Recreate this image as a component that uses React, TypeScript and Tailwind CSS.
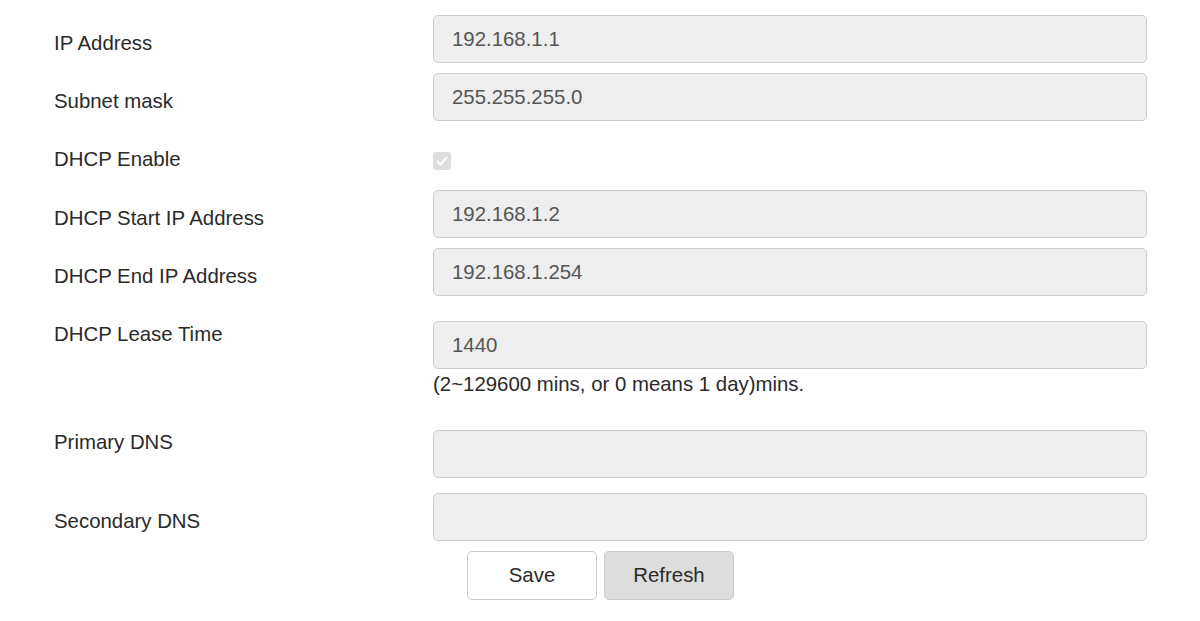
import React from 'react';

const font = "font-['Liberation_Sans',Arial,sans-serif]";

function Field({ value }: { value: string }) {
  return (
    <div className="w-[714px] h-[48px] rounded-[5px] border border-[#cccccc] bg-[#eeeeee] pl-[18px] flex items-center text-[20.4px] text-[#555555]">
      {value}
    </div>
  );
}

function Label({ children }: { children: React.ReactNode }) {
  return <div className="w-[379px] shrink-0 pt-4 leading-6 text-[20.4px] text-[#2a2a2a]">{children}</div>;
}

export default function App() {
  return (
    <div className={`w-[1200px] h-[621px] overflow-hidden bg-white ${font}`}>
      <div className="pl-[54px] pt-[15px] flex flex-col">
        {/* IP Address */}
        <div className="flex items-start">
          <Label>IP Address</Label>
          <Field value="192.168.1.1" />
        </div>

        {/* Subnet mask */}
        <div className="flex items-start mt-[10px]">
          <Label>Subnet mask</Label>
          <Field value="255.255.255.0" />
        </div>

        {/* DHCP Enable */}
        <div className="flex items-start mt-[10px] h-[48px]">
          <Label>DHCP Enable</Label>
          <div className="pt-[21px]">
            <div className="w-[18px] h-[18px] rounded-[3px] bg-[#dddddd] flex items-center justify-center">
              <svg width="14" height="14" viewBox="0 0 14 14" fill="none">
                <path d="M2.5 7.5 L5.5 10.5 L11.5 3.5" stroke="#ffffff" strokeWidth="1.8" strokeLinecap="round" strokeLinejoin="round" />
              </svg>
            </div>
          </div>
        </div>

        {/* DHCP Start */}
        <div className="flex items-start mt-[11px]">
          <Label>DHCP Start IP Address</Label>
          <Field value="192.168.1.2" />
        </div>

        {/* DHCP End */}
        <div className="flex items-start mt-[10px]">
          <Label>DHCP End IP Address</Label>
          <Field value="192.168.1.254" />
        </div>

        {/* Lease time */}
        <div className="flex items-start mt-[10px]">
          <Label>DHCP Lease Time</Label>
          <div className="pt-[15px]">
            <Field value="1440" />
            <div className="mt-[3px] leading-6 text-[20.4px] text-[#2a2a2a]">(2~129600 mins, or 0 means 1 day)mins.</div>
          </div>
        </div>

        {/* Primary DNS */}
        <div className="flex items-start mt-[18px]">
          <Label>Primary DNS</Label>
          <div className="pt-4">
            <Field value="" />
          </div>
        </div>

        {/* Secondary DNS */}
        <div className="flex items-start mt-[15px]">
          <Label>Secondary DNS</Label>
          <Field value="" />
        </div>

        {/* Buttons */}
        <div className="flex items-start mt-[10px] pl-[413px] gap-[7px]">
          <button className="w-[130px] h-[49px] rounded-[5px] border border-[#cccccc] bg-white text-[20.4px] text-[#2a2a2a]">
            Save
          </button>
          <button className="w-[130px] h-[49px] rounded-[5px] border border-[#cccccc] bg-[#dddddd] text-[20.4px] text-[#2a2a2a]">
            Refresh
          </button>
        </div>
      </div>
    </div>
  );
}
